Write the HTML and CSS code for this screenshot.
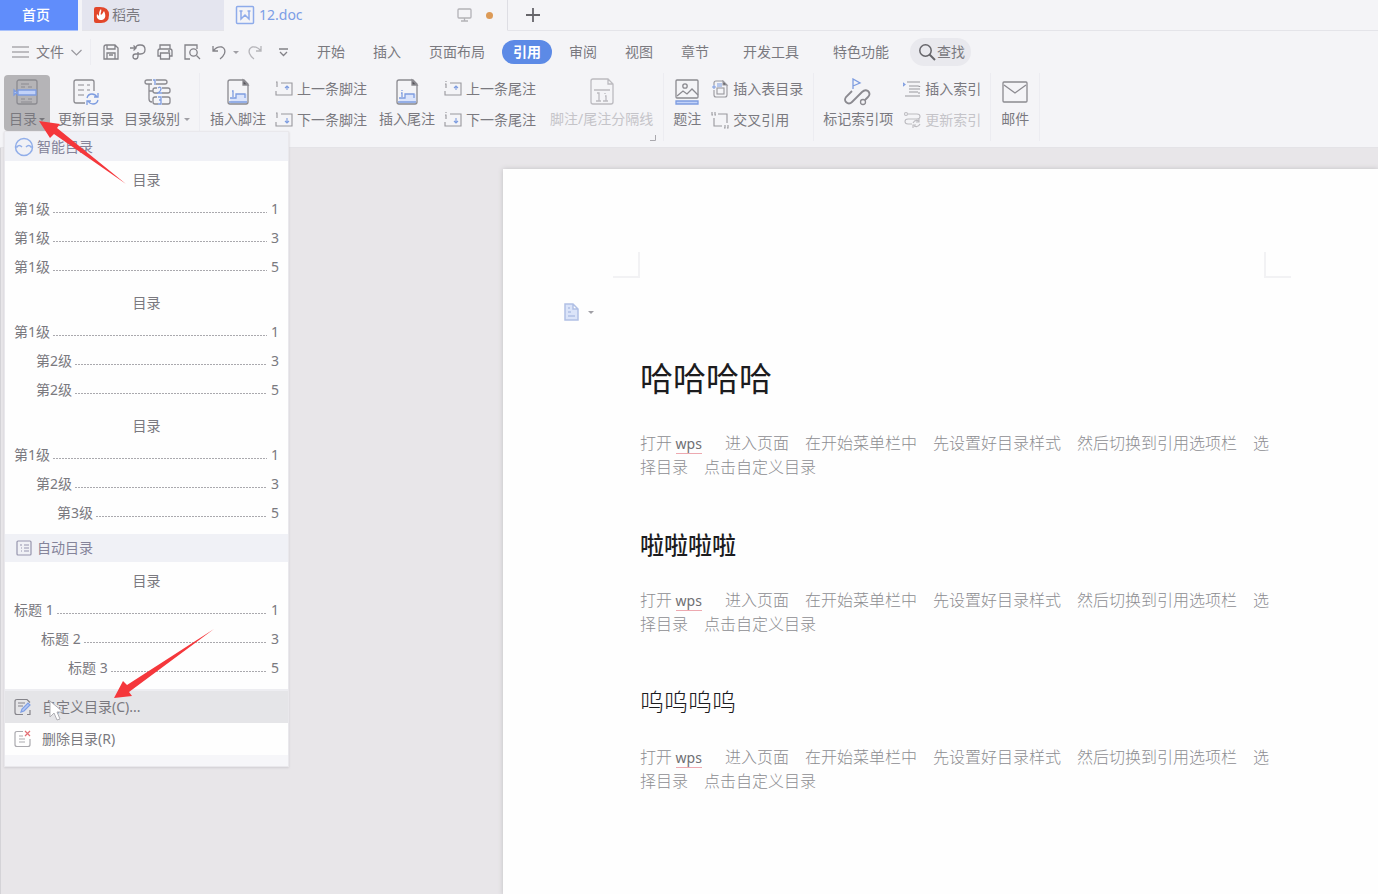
FILE: index.html
```html
<!DOCTYPE html>
<html lang="zh-CN">
<head>
<meta charset="utf-8">
<title>12.doc</title>
<link rel="stylesheet" href="styles.css">
</head>
<body>
<header class="tabs">
  <button class="tab tab-home">首页</button>
  <button class="tab tab-docer">
    <svg width="17" height="18" viewBox="0 0 17 18"><path d="M1 3Q1 1 3 1H7Q16 1 16 9T8 17H3Q1 17 1 15Z" fill="#e2472b"/><path d="M8 3c1 3-1 4 0 6 1-1 2-2 3-4 2 4 2 8-2 9-4 0-6-2-5-6l2 2c0-3 0-5 2-7z" fill="#fff"/></svg>
    稻壳
  </button>
  <button class="tab tab-doc">
    <svg width="20" height="20" viewBox="0 0 20 20" fill="none" stroke="#8eabea"><rect x="1.500" y="1.500" width="17" height="17" rx="1" stroke-width="1.500"/><path d="M6 6v8l4-4 4 4V6M4.500 6h3M12.500 6h3" stroke-width="1.500"/></svg>
    <span class="doc-name">12.doc</span>
    <svg width="15" height="14" viewBox="0 0 15 14" fill="none" stroke="#b3b2b7" stroke-width="1.300"><rect x="1" y="1" width="13" height="9" rx="1"/><path d="M7.500 10v3M4 13h7"/></svg>
    <span class="dot"></span>
  </button>
  <button class="tab tab-new" aria-label="新建"><svg width="14" height="14" viewBox="0 0 14 14" stroke="#66656a" stroke-width="1.800"><path d="M7 0v14M0 7h14"/></svg></button>
</header>

<nav class="menubar">
  <button class="file">
    <svg width="17" height="12" viewBox="0 0 17 12" stroke="#85848a" stroke-width="1.200"><path d="M0 1h17M0 6h17M0 11h17"/></svg>
    文件
    <svg width="11" height="7" viewBox="0 0 11 7" fill="none" stroke="#99989e" stroke-width="1.200"><path d="M.5 1l5 5 5-5"/></svg>
  </button>
  <div class="quick">
    <button aria-label="保存"><svg width="18" height="18" viewBox="0 0 18 18"><path d="M2 16V4q0-2 2-2h9l3 3v11zM5 2v4h8V2M5 16v-6h8v6M7 12h4"/></svg></button>
    <button aria-label="输出为PDF"><svg width="18" height="18" viewBox="0 0 18 18"><path d="M7 5q0-3 3.500-3h1Q16 2 16 6.500T11.500 11H8M9 9v4q0 3-2.500 3T4 13.500 6.500 11H9M1 5h6M4.500 2.500 7 5 4.500 7.500"/></svg></button>
    <button aria-label="打印"><svg width="18" height="18" viewBox="0 0 18 18"><path d="M4 6V2h10v4M4 13H2V8q0-2 2-2h10q2 0 2 2v5h-2M4.500 10h9v6h-9zM12 8h2"/></svg></button>
    <button aria-label="打印预览"><svg width="18" height="18" viewBox="0 0 18 18"><path d="M7 16H2V2h12v4"/><circle cx="10.500" cy="9.500" r="3.700"/><path d="M13.500 12.500 17 16"/></svg></button>
    <button aria-label="撤销"><svg width="18" height="18" viewBox="0 0 18 18"><path d="M3 3v5h5M3 8q4-5 9-4 4 2 2.500 6.500Q13 14 10 16"/></svg></button>
    <button class="tiny" aria-label="撤销列表"><i class="caret"></i></button>
    <button class="faded" aria-label="恢复"><svg width="18" height="18" viewBox="0 0 18 18"><path d="M15 3v5h-5M15 8Q11 3 6 4 2 6 3.500 10.500 5 14 8 16"/></svg></button>
    <button class="custom" aria-label="自定义快速访问"><svg width="9" height="9" viewBox="0 0 9 9"><path d="M0 1h9M1 4l3.500 3.500L8 4"/></svg></button>
  </div>
  <div class="menus">
    <button>开始</button><button>插入</button><button>页面布局</button><button class="active">引用</button><button>审阅</button><button>视图</button><button>章节</button><button class="wide">开发工具</button><button class="wide">特色功能</button>
  </div>
  <button class="search"><svg width="19" height="19" viewBox="0 0 19 19" fill="none" stroke="#66656a" stroke-width="1.500"><circle cx="7.500" cy="7.500" r="5.700"/><path d="M11.500 11.500 17 17" stroke-width="2"/></svg>查找</button>
</nav>

<section class="ribbon">
  <div class="group g-toc">
    <button class="big pressed"><svg width="28" height="28" viewBox="0 0 28 28"><rect x="4" y="2" width="20" height="24" rx="2"/><path d="M8 6h8M8 9h4M15 9h4M8 21h4M15 21h4M8 24h11" stroke-width="1"/><path d="M5 12h18v5H5zM1 12v5l3-2.500z" class="blue"/></svg><span>目录<i class="caret"></i></span></button>
    <button class="big"><svg width="28" height="28" viewBox="0 0 28 28"><path d="M13 25H4q-2 0-2-2V4q0-2 2-2h16q2 0 2 2v9"/><path d="M6 7h6M15 7h3M6 12h6M15 12h3M6 17h6" stroke-width="1"/><path d="M15 20q1-4 5-4 3 0 5 3M26 15v4h-4M26 22q-1 4-5 4-3 0-5-3M15 27v-4h4" class="blueline"/></svg><span>更新目录</span></button>
    <button class="big"><svg width="28" height="28" viewBox="0 0 28 28"><path d="M9 2H4Q2 2 2 4t2 2h5M13 6h9q2 0 2-2t-2-2h-9M6 6v15q0 3 3 3M6 13h4M14 10h-2q-2 0-2 2v1q0 2 2 2h3M19 15h6q2 0 2-2v-1q0-2-2-2h-6M14 19h-2q-2 0-2 2v3q0 2 2 2h3M19 26h6q2 0 2-2v-3q0-2-2-2h-6"/><path d="M10 2h2v5M15 10q3-2 3 1 0 2-3 4h4M15 19h3v3h-2 2v4h-3" class="blueline"/></svg><span>目录级别<i class="caret"></i></span></button>
  </div>
  <div class="group g-note">
    <button class="big"><svg width="28" height="28" viewBox="0 0 28 28"><path d="M6 20h6v-4h11v8q0 2-2 2H7z" class="pale"/><path d="M20 2H6Q4 2 4 4v20q0 2 2 2h16q2 0 2-2V6z"/><path d="M19 2l5 5h-5z" fill="#55545a"/><path d="M5 24h18M8 13h1v6M6 20h6v-4h9v4" class="blueline"/></svg><span>插入脚注</span></button>
    <div class="stack">
      <button class="small"><svg width="18" height="18" viewBox="0 0 18 18"><path d="M6 3h11v12H1v-4M1 2h1v5"/><path d="M12 10V6M10 8l2-2 2 2" class="blueline"/></svg>上一条脚注</button>
      <button class="small"><svg width="18" height="18" viewBox="0 0 18 18"><path d="M6 3h11v12H1v-4M1 2h1v5"/><path d="M12 7v5M10 10l2 2 2-2" class="blueline"/></svg>下一条脚注</button>
    </div>
    <button class="big"><svg width="28" height="28" viewBox="0 0 28 28"><path d="M6 20h6v-4h11v8q0 2-2 2H7z" class="pale"/><path d="M20 2H6Q4 2 4 4v20q0 2 2 2h16q2 0 2-2V6z"/><path d="M19 2l5 5h-5z" fill="#55545a"/><path d="M5 24h18M8 15h1v4M9 12v1M6 20h6v-4h9v4" class="blueline"/></svg><span>插入尾注</span></button>
    <div class="stack">
      <button class="small"><svg width="18" height="18" viewBox="0 0 18 18"><path d="M6 3h11v12H1v-4M2 1v1M1 4h1v4"/><path d="M12 10V6M10 8l2-2 2 2" class="blueline"/></svg>上一条尾注</button>
      <button class="small"><svg width="18" height="18" viewBox="0 0 18 18"><path d="M6 3h11v12H1v-4M2 1v1M1 4h1v4"/><path d="M12 7v5M10 10l2 2 2-2" class="blueline"/></svg>下一条尾注</button>
    </div>
    <button class="big divider" disabled><svg width="28" height="28" viewBox="0 0 28 28"><path d="M20 1H5Q3 1 3 3v21q0 2 2 2h18q2 0 2-2V6zM20 1v5h5M6 12h16M9 15h2v8M8 23h5M17 18h1v5M15 23h5M17 15v1"/></svg><span>脚注/尾注分隔线</span></button>
    <svg class="launcher" width="6" height="6" viewBox="0 0 6 6" fill="none" stroke="#aaa9ae"><path d="M5.500 0v5.500H0"/></svg>
  </div>
  <div class="group g-caption">
    <button class="big"><svg width="28" height="28" viewBox="0 0 28 28"><rect x="3" y="2" width="22" height="18" rx="1"/><circle cx="12" cy="8" r="2.200"/><path d="M4 18l6-5 4 3 5-5 6 6"/><path d="M3 23h22v3H3z" class="blue"/></svg><span>题注</span></button>
    <div class="stack">
      <button class="small"><svg width="18" height="18" viewBox="0 0 18 18"><path d="M12 1H5Q3 1 3 3v2M3 10v5q0 2 2 2h9q2 0 2-2V5"/><path d="M12 1l4 4h-4z" fill="#55545a"/><rect x="6" y="8" width="7" height="6"/><path d="M6 4h5M6 6h5M1 7h4M3 5v4" class="blueline"/></svg>插入表目录</button>
      <button class="small"><svg width="18" height="18" viewBox="0 0 18 18"><path d="M7 3h9v9M3 7v8h8M1 1v3h1M4 1v3h1M14 14v3h-1M17 14v3h-1"/></svg>交叉引用</button>
    </div>
  </div>
  <div class="group g-index">
    <button class="big"><svg width="28" height="28" viewBox="0 0 28 28"><path d="M8 13l-6 6q-2 3 0 5 3 3 6 0L18 14q3-3 6-1 3 3 0 6l-3 3" stroke-width="1.800"/><circle cx="19" cy="24" r="2.500"/><path d="M9 11V1l7 4-7 3" class="blueline"/></svg><span>标记索引项</span></button>
    <div class="stack">
      <button class="small"><svg width="18" height="18" viewBox="0 0 18 18"><path d="M4 2h13M6 6h9q2 0 2 1M6 9h11M6 12h9M2 16h15M17 13h-2"/><path d="M0 3l2 1.500-2 1.500z" class="blueline"/></svg>插入索引</button>
      <button class="small" disabled><svg width="18" height="18" viewBox="0 0 18 18"><circle cx="3" cy="3" r="1.500"/><path d="M5 3h9q3 0 3 2.500T14 8H5q-3 0-3 2.500T5 13h4M10 12q2-4 6-2M16 8v3h-3M17 13q-2 4-6 2M10 17v-3h3"/></svg>更新索引</button>
    </div>
  </div>
  <div class="group g-mail">
    <button class="big"><svg width="28" height="28" viewBox="0 0 28 28"><rect x="2" y="4" width="24" height="20" rx="1"/><path d="M3 7l11 8L25 7"/></svg><span>邮件</span></button>
  </div>
</section>

<main class="canvas">
  <article class="page">
    <div class="crops"><span class="crop crop-left"></span><span class="crop crop-right"></span></div>
    <button class="paste" aria-label="文档选项"><svg width="16" height="18" viewBox="0 0 16 18" fill="#dbe4f9" stroke="#b1c0e5" stroke-width="1.500"><path d="M1 1h8l5 5v11H1zM9 1v5h5M4 5h2M4 9h3M4 13h7"/></svg><i class="caret"></i></button>
    <div class="text">
      <h1>哈哈哈哈</h1>
      <p>打开 <span class="latin">wps</span>进入页面　在开始菜单栏中　先设置好目录样式　然后切换到引用选项栏　选择目录　点击自定义目录</p>
      <h2>啦啦啦啦</h2>
      <p>打开 <span class="latin">wps</span>进入页面　在开始菜单栏中　先设置好目录样式　然后切换到引用选项栏　选择目录　点击自定义目录</p>
      <h3>呜呜呜呜</h3>
      <p>打开 <span class="latin">wps</span>进入页面　在开始菜单栏中　先设置好目录样式　然后切换到引用选项栏　选择目录　点击自定义目录</p>
    </div>
  </article>
</main>

<aside class="dropdown">
  <div class="strip"><svg width="20" height="20" viewBox="0 0 20 20" fill="none" stroke="#91aee9" stroke-width="1.500"><circle cx="10" cy="10" r="8.500"/><path d="M1 10h2q2-3 5 0M12 10q3-3 5 0h2"/></svg>智能目录</div>
  <button class="toc"><span class="toc-title">目录</span>
    <span class="row">第1级<i class="leader"></i><b>1</b></span>
    <span class="row">第1级<i class="leader"></i><b>3</b></span>
    <span class="row">第1级<i class="leader"></i><b>5</b></span></button>
  <button class="toc"><span class="toc-title">目录</span>
    <span class="row">第1级<i class="leader"></i><b>1</b></span>
    <span class="row level-2">第2级<i class="leader"></i><b>3</b></span>
    <span class="row level-2">第2级<i class="leader"></i><b>5</b></span></button>
  <button class="toc"><span class="toc-title">目录</span>
    <span class="row">第1级<i class="leader"></i><b>1</b></span>
    <span class="row level-2">第2级<i class="leader"></i><b>3</b></span>
    <span class="row level-3">第3级<i class="leader"></i><b>5</b></span></button>
  <div class="strip strip-auto"><svg width="20" height="20" viewBox="0 0 20 20" fill="none" stroke="#9695ad" stroke-width="1.200"><rect x="3" y="3" width="14" height="14" rx="1"/><path d="M6 7h2M10 7h5M7 10h1M10 10h5M7 13h1M10 13h5"/></svg>自动目录</div>
  <button class="toc"><span class="toc-title">目录</span>
    <span class="row">标题 1<i class="leader"></i><b>1</b></span>
    <span class="row heading-2">标题 2<i class="leader"></i><b>3</b></span>
    <span class="row heading-3">标题 3<i class="leader"></i><b>5</b></span></button>
  <div class="commands">
    <button class="command hover"><svg width="18" height="18" viewBox="0 0 18 18" fill="none" stroke="#85848a" stroke-width="1.200"><path d="M9 16.500H3q-2 0-2-2v-11q0-2 2-2h10l3 3M16 12v4.500h-3M4 5h7M4 8h5"/><path d="M7 14l1-3 6-6 2 2-6 6z" fill="#b5c8f4" stroke="#7e9fe5"/></svg>自定义目录(C)...</button>
    <button class="command"><svg width="18" height="18" viewBox="0 0 18 18" fill="none" stroke="#aaa9ae" stroke-width="1.200"><path d="M9 1.500H3q-2 0-2 2v11q0 2 2 2h11q2 0 2-2V9M5 6h4M5 9h6M5 12h6"/><path d="M11 1l5 5M16 1l-5 5" stroke="#e46f75"/></svg>删除目录(R)</button>
  </div>
</aside>

<svg class="marks" width="220" height="730" viewBox="0 0 220 730" aria-hidden="true">
  <path d="M50 701v16l4-4 3 7 3-1-3-7h6z" fill="#fff" stroke="#b0afb4"/>
  <path d="M39 121l21 3-3 4 69 56-72-50-4 4z" fill="#f5373b"/>
  <path d="M114 698l9-17 4 4 87-56-85 63 3 4z" fill="#f5373b"/>
</svg>
</body>
</html>
```

FILE: styles.css
```css
* { box-sizing: border-box; }
body {
  margin: 0;
  min-height: 100vh;
  display: flex;
  flex-direction: column;
  position: relative;
  overflow-x: hidden;
  background: #f4f4f7;
  color: #7a797f;
  font: 14px/20px "Noto Sans", "Noto Sans CJK SC", sans-serif;
}
button {
  margin: 0;
  padding: 0;
  border: 0;
  background: none;
  color: inherit;
  font: inherit;
  white-space: nowrap;
}
svg { display: block; flex: none; }

/* Document tabs */
.tabs { display: flex; height: 31px; }
.tab { display: flex; align-items: center; border-bottom: 1px solid #e4e4e9; }
.tab-home { width: 78px; justify-content: center; background: #608dfb; color: #fff; font-weight: 500; border-color: #a9c1fb; padding-right: 6px; }
.tab-docer { width: 142px; margin-left: 4px; padding-left: 11px; gap: 2px; background: #e4e5ef; }
.tab-doc { width: 284px; padding: 0 14px 0 11px; gap: 4px; border-bottom-color: transparent; border-right: 1px solid #dedee4; color: #7c9ee6; }
.doc-name { flex: 1; text-align: left; }
.dot { width: 7px; height: 7px; margin-left: 10px; border-radius: 50%; background: #dc9a57; }
.tab-new { flex: 1; padding-left: 18px; }

/* Menu bar */
.menubar { display: flex; align-items: center; height: 42px; }
.file { display: flex; align-items: center; gap: 7px; width: 91px; height: 26px; padding-left: 12px; border-right: 1px solid #ececf1; }
.quick { display: flex; align-items: center; width: 215px; padding-left: 11px; gap: 9px; }
.quick svg { fill: none; stroke: #838288; stroke-width: 1.3; }
.quick .tiny { display: flex; margin: 0 -2px 0 -8px; }
.quick .faded { opacity: .55; }
.quick .custom { margin-left: 6px; }
.menus { display: flex; gap: 6px; }
.menus button { height: 24px; padding: 0 11px; border-radius: 12px; }
.menus .wide { margin-left: 6px; }
.menus .active { background: #5c8ae6; color: #fff; font-weight: 700; }
.search { display: flex; align-items: center; height: 28px; padding: 0 6px 0 8px; margin-left: 10px; border-radius: 14px; background: #e9e9ee; }

/* Ribbon */
.ribbon { display: flex; height: 75px; border-bottom: 1px solid #e4e3e7; }
.group { position: relative; display: flex; flex: none; align-items: flex-start; height: 68px; padding: 2px 10px 0 9px; gap: 9px; border-right: 1px solid #ececf1; }
.big { display: flex; flex: none; flex-direction: column; align-items: center; height: 56px; padding-top: 3px; gap: 3px; }
.big span { display: flex; align-items: center; }
.big svg, .small svg { fill: none; stroke: #8b8a90; stroke-width: 1.3; }
.ribbon .blue { fill: #c2d2f8; stroke: #7d9ce0; }
.ribbon .blueline { stroke: #7d9ce0; }
.ribbon .pale { fill: #dbe4fb; stroke: none; }
.pressed { width: 46px; border-radius: 4px; background: #b5b4b7; }
.caret { width: 0; height: 0; margin-left: 4px; border: 3px solid transparent; border-top-color: #a09fa5; border-bottom: 0; }
.pressed .caret { margin-left: 2px; border-top-color: #77767b; }
.stack { display: flex; flex-direction: column; gap: 11px; padding-top: 4px; }
.small { display: flex; align-items: center; gap: 4px; height: 20px; }
.small svg { stroke-width: 1.1; stroke: #98979d; }
.ribbon button:disabled { color: #c5c4c9; }
.ribbon button:disabled svg { stroke: #bcbbc0; }
.g-toc { width: 200px; padding: 2px 0 0 4px; gap: 8px; }
.g-toc .big:nth-child(3) { margin-left: 2px; }
.g-note { padding-left: 10px; }
.g-note .stack { margin-right: 3px; }
.g-note .divider { padding-left: 2px; }
.g-caption .stack { margin-left: 1px; }
.g-index { padding-right: 9px; gap: 10px; }
.g-mail { padding-left: 10px; }
.launcher { position: absolute; right: 7px; bottom: 0; }

/* Page area */
.canvas { flex: 1; padding: 21px 0 0 503px; background: #e8e6e9; border-left: 1px solid #d4d3d7; }
.page { height: 100%; min-height: 726px; padding: 83px 0 0 110px; margin-left: -1px; background: #fefefe; box-shadow: 0 0 5px #c0bfc2; }
.crops { display: flex; justify-content: space-between; max-width: 678px; }
.crop { width: 27px; height: 26px; border-bottom: 2px solid #f2f2f4; }
.crop-left { border-right: 2px solid #f2f2f4; }
.crop-right { border-left: 2px solid #f2f2f4; }
.paste { display: flex; align-items: center; gap: 4px; margin: 25px 0 0 -49px; }
.text { max-width: 657px; padding-left: 27px; }
.text h1, .text h2, .text h3 { margin: 0; color: #1c1c1e; font-family: "Noto Sans CJK SC", sans-serif; }
.text h1 { margin-top: 34px; font-size: 33px; line-height: 44px; font-weight: 400; }
.text h2 { font-size: 24px; line-height: 36px; font-weight: 500; }
.text h3 { font-size: 24px; line-height: 36px; font-weight: 300; }
.text p { margin: 31px 0 48px; color: #8d8d91; font: 300 16px/24px "Noto Sans CJK SC", sans-serif; }
.text h2 + p, .text h3 + p { margin-top: 25px; }
.latin { margin-right: 23px; border-bottom: 1px solid #eda9b0; color: #6f6f73; font: 14px/16px "Noto Sans", sans-serif; }

/* Table of contents menu */
.dropdown { position: absolute; left: 4px; top: 131px; width: 285px; border: 1px solid #e9e8ec; background: #fefefe; box-shadow: 0 1px 2px #cfced2; }
.strip { display: flex; align-items: center; gap: 3px; height: 29px; padding-left: 9px; background: #f0f1f6; color: #85849a; }
.strip-auto { height: 28px; margin-top: 4px; }
.toc { display: block; width: 100%; padding: 5px 9px 3px; text-align: left; }
.toc-title { display: block; text-align: center; line-height: 28px; }
.row { display: flex; align-items: center; height: 29px; }
.row b { width: 8px; font-weight: 400; }
.leader { flex: 1; height: 1px; margin: 8px 4px 0 3px; background: repeating-linear-gradient(90deg, #aaa9ae 0 2px, transparent 2px 3px); }
.level-2 { padding-left: 22px; }
.level-3 { padding-left: 43px; }
.heading-2 { padding-left: 27px; }
.heading-3 { padding-left: 54px; }
.commands { margin-top: 4px; padding-bottom: 11px; border-top: 2px solid #ededf1; background: linear-gradient(#fefefe 64px, #f6f6f9 64px); }
.command { display: flex; align-items: center; width: 100%; height: 32px; gap: 10px; padding-left: 9px; }
.command.hover { background: #e5e5e8; }

.marks { position: absolute; left: 0; top: 0; pointer-events: none; }
```
